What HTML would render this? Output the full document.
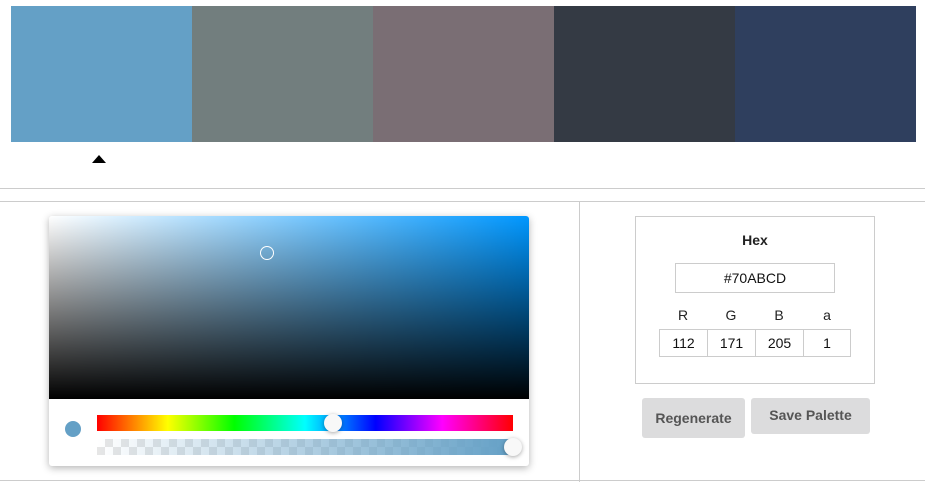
<!DOCTYPE html>
<html><head><style>
body{margin:0;width:925px;height:482px;background:#fff;position:relative;overflow:hidden;font-family:"Liberation Sans",sans-serif}
.a{position:absolute}
.sw{top:6px;height:136px;width:181px}
.inp{position:absolute;border:1px solid #ccc;background:#fff;box-sizing:border-box;text-align:center;font-size:14px;color:#111}
.btn{position:absolute;background:#dcdcdd;border-radius:3px;color:#555;font-weight:bold;font-size:14px;text-align:center}
</style></head><body>
<div class="a sw" style="left:11px;background:#64a0c6"></div>
<div class="a sw" style="left:192px;background:#727e7e"></div>
<div class="a sw" style="left:373px;background:#7a6e74"></div>
<div class="a sw" style="left:554px;background:#343a44"></div>
<div class="a sw" style="left:735px;width:181px;background:#2f3f5e"></div>
<div class="a" style="left:92px;top:155px;width:0;height:0;border-left:7px solid transparent;border-right:7px solid transparent;border-bottom:8px solid #000"></div>
<div class="a" style="left:0;top:188px;width:925px;height:1px;background:#ccc"></div>
<div class="a" style="left:0;top:201px;width:925px;height:1px;background:#ccc"></div>
<div class="a" style="left:579px;top:201px;width:1px;height:281px;background:#ccc"></div>
<div class="a" style="left:0;top:480px;width:925px;height:1px;background:#ccc"></div>

<div class="a" style="left:49px;top:216px;width:480px;height:250px;background:#fff;border-radius:3px;box-shadow:0 2px 8px rgba(0,0,0,.3)">
 <div class="a" style="left:0;top:0;width:480px;height:183px;border-radius:3px 3px 0 0;background:linear-gradient(to top,#000,rgba(0,0,0,0)),linear-gradient(to right,#fff,#0097ff)"></div>
 <div class="a" style="left:211px;top:30px;width:12px;height:12px;border:1.5px solid #fff;border-radius:50%"></div>
 <div class="a" style="left:16px;top:205px;width:16px;height:16px;border-radius:50%;background:#64a0c6"></div>
 <div class="a" style="left:48px;top:199px;width:416px;height:16px;background:linear-gradient(to right,#f00,#ff0 17%,#0f0 33%,#0ff 50%,#00f 67%,#f0f 83%,#f00)"></div>
 <div class="a" style="left:48px;top:223px;width:416px;height:16px;background:linear-gradient(to right,rgba(100,160,198,0),#64a0c6),repeating-conic-gradient(#e6e6e6 0 25%,#fff 0 50%) 0 0/16px 16px"></div>
 <div class="a" style="left:275px;top:198px;width:18px;height:18px;border-radius:50%;background:#f8f8f8;box-shadow:0 1px 4px rgba(0,0,0,.35)"></div>
 <div class="a" style="left:455px;top:222px;width:18px;height:18px;border-radius:50%;background:#f8f8f8;box-shadow:0 1px 4px rgba(0,0,0,.35)"></div>
</div>

<div class="a" style="left:635px;top:216px;width:238px;height:166px;border:1px solid #ccc"></div>
<div class="a" style="left:635px;top:232px;width:240px;text-align:center;font-size:14px;font-weight:bold;color:#222">Hex</div>
<div class="inp" style="left:675px;top:263px;width:160px;height:30px;line-height:28px">#70ABCD</div>
<div class="a" style="left:659px;top:307px;width:48px;text-align:center;font-size:14px;color:#222">R</div>
<div class="a" style="left:707px;top:307px;width:48px;text-align:center;font-size:14px;color:#222">G</div>
<div class="a" style="left:755px;top:307px;width:48px;text-align:center;font-size:14px;color:#222">B</div>
<div class="a" style="left:803px;top:307px;width:48px;text-align:center;font-size:14px;color:#222">a</div>
<div class="inp" style="left:659px;top:329px;width:49px;height:28px;line-height:26px">112</div>
<div class="inp" style="left:707px;top:329px;width:49px;height:28px;line-height:26px">171</div>
<div class="inp" style="left:755px;top:329px;width:49px;height:28px;line-height:26px">205</div>
<div class="inp" style="left:803px;top:329px;width:48px;height:28px;line-height:26px">1</div>
<div class="btn" style="left:642px;top:398px;width:103px;height:40px;line-height:40px">Regenerate</div>
<div class="btn" style="left:751px;top:398px;width:119px;height:36px;line-height:35px">Save Palette</div>
</body></html>
